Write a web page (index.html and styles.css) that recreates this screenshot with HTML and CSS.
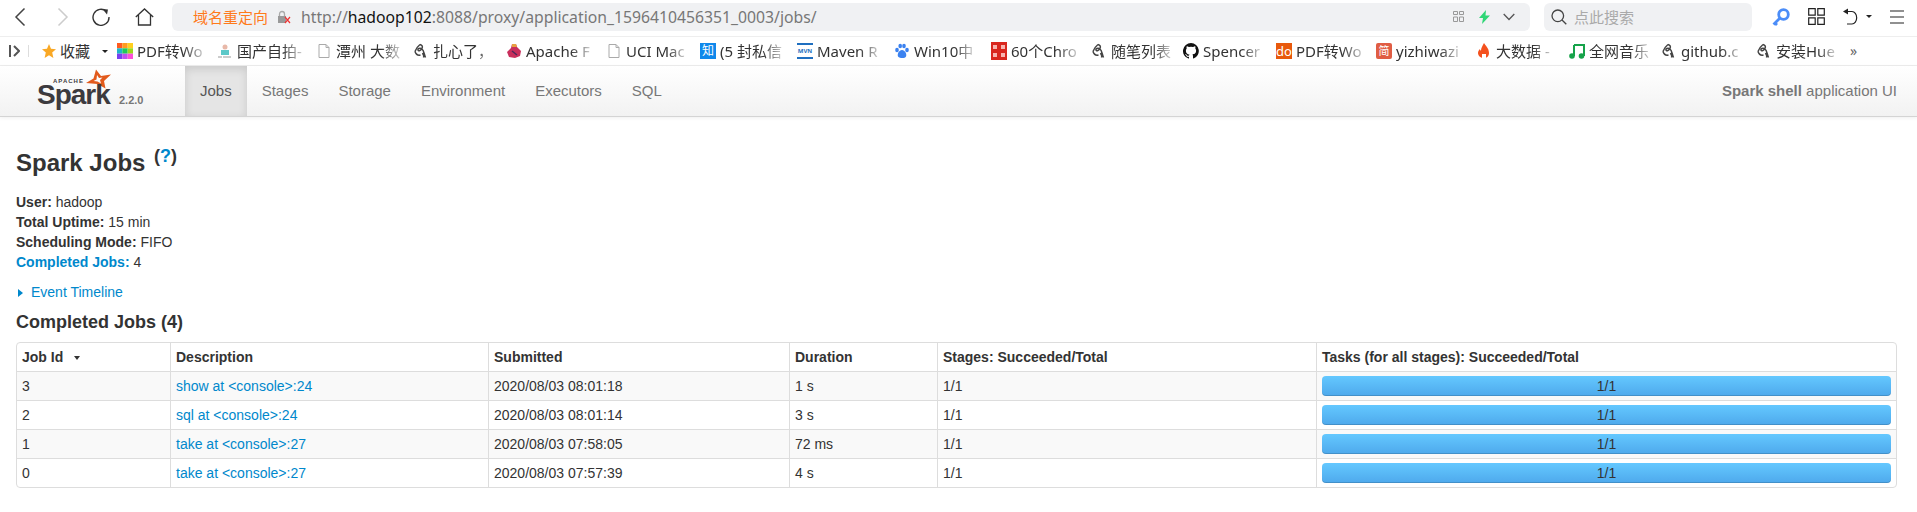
FILE: index.html
```html
<!DOCTYPE html>
<html lang="en">
<head>
  <meta charset="UTF-8">
  <title>Spark Jobs</title>
  <link rel="stylesheet" href="styles.css">
</head>
<body>
  <svg class="defs" width="0" height="0">
    <symbol id="quill" viewBox="0 0 16 16">
      <path d="M2 8.500c1 3 3.500 4 5.500 3.500M7 1.500C5 3 3 6 2 8.500M7 1.500c2 .5 3 2 2 4-1 2-3.500 3-4 1.500-.5-1.500 2-2.500 4-1 2 1.500 2 5 3.500 8.500M9.500 10c1 1.500 1.500 3 1 4.500" fill="none" stroke="#444" stroke-width="1.500"/>
    </symbol>
    <symbol id="doc" viewBox="0 0 16 16">
      <path d="M3 1.500h7l3 3v10H3zM10 1.500v3h3" fill="#fff" stroke="#aaa"/>
    </symbol>
  </svg>

  <div class="toolbar">
    <svg class="tool tool-back" width="12" height="20" viewBox="0 0 12 20"><path d="M10.500 1.500 2 10l8.500 8.500" fill="none" stroke="#444" stroke-width="1.500"/></svg>
    <svg class="tool tool-forward" width="12" height="20" viewBox="0 0 12 20"><path d="M1.500 1.500 10 10l-8.500 8.500" fill="none" stroke="#ccc" stroke-width="1.500"/></svg>
    <svg class="tool tool-reload" width="18" height="18" viewBox="0 0 18 18"><path d="M14.500 3.500A8 8 0 1 0 17 9" fill="none" stroke="#333" stroke-width="1.400"/><path d="M10.500 1 16 1.500 15 6.500z" fill="#333"/></svg>
    <svg class="tool tool-home" width="19" height="18" viewBox="0 0 19 18"><path d="M.8 9 9.500 1l8.700 8M3.500 7v10h12V7" fill="none" stroke="#333" stroke-width="1.300"/></svg>

    <div class="address">
      <span class="redirect">域名重定向</span>
      <svg class="lock" width="14" height="14" viewBox="0 0 14 14"><path d="M2.500 6V4a2.500 2.500 0 0 1 5 0v2" fill="none" stroke="#aaa" stroke-width="1.300"/><rect x="1" y="6" width="8" height="7" fill="#999"/><path d="m8 7 5 6m0-6-5 6" stroke="#e33" stroke-width="1.200"/></svg>
      <span class="url">http://<b>hadoop102</b>:8088/proxy/application_1596410456351_0003/jobs/</span>
      <svg class="qr" width="11" height="11" viewBox="0 0 11 11"><path d="M.5.5h4v3h-4zM6.500.5h4v3h-4zM.5 6h4v4.500h-4zM6.500 6h4v4.500h-4z" fill="none" stroke="#999"/></svg>
      <svg class="bolt" width="11" height="14" viewBox="0 0 11 14"><path d="M7 0 0 8h4l-1 6 8-8.500H6.500z" fill="#2fd675"/></svg>
      <svg class="chevron" width="12" height="8" viewBox="0 0 12 8"><path d="m.7 1 5.300 5.500L11.300 1" fill="none" stroke="#555" stroke-width="1.300"/></svg>
    </div>

    <div class="search">
      <svg width="16" height="16" viewBox="0 0 16 16"><circle cx="6.800" cy="6.800" r="5.800" fill="none" stroke="#444" stroke-width="1.300"/><path d="m11 11 4.300 4.300" stroke="#444" stroke-width="1.300"/></svg>
      <span>点此搜索</span>
    </div>

    <svg class="tool tool-key" width="18" height="18" viewBox="0 0 18 18"><circle cx="11.500" cy="6.500" r="4.800" fill="none" stroke="#4b8df8" stroke-width="2.800"/><path d="M8 10 1.500 16.500M3 15l2 2" stroke="#4b8df8" stroke-width="2.800"/></svg>
    <svg class="tool tool-grid" width="17" height="17" viewBox="0 0 17 17"><path d="M.7.7h6.500v6.500H.7zM9.800.7h6.500v6.500H9.800zM.7 9.800h6.500v6.500H.7zM9.800 9.800h6.500v6.500H9.800z" fill="none" stroke="#222" stroke-width="1.200"/></svg>
    <svg class="tool tool-undo" width="16" height="17" viewBox="0 0 16 17"><path d="M3 3.500h6a4.500 6 0 0 1 0 12.500H4" fill="none" stroke="#222" stroke-width="1.200"/><path d="M5 .5v6L0 3.500z" fill="#222"/></svg>
    <span class="tool-caret"></span>
    <svg class="tool tool-menu" width="14" height="14" viewBox="0 0 14 14"><path d="M0 1h14M0 7h14M0 13h14" stroke="#222" stroke-width="1.200"/></svg>
  </div>

  <div class="bookmarks">
    <svg class="bm-toggle" width="11" height="12" viewBox="0 0 11 12"><path d="M1 0v12" stroke="#555" stroke-width="2"/><path d="m5 1 5 5-5 5" fill="none" stroke="#555" stroke-width="2"/></svg>
    <span class="bm-divider"></span>
    <div class="bm bm-fav">
      <svg width="14" height="14" viewBox="0 0 14 14"><path d="m7 0 2 4.800 5 .4-3.800 3.300L11.400 14 7 11.200 2.600 14l1.200-5.500L0 5.200l5-.4z" fill="#f9a825"/></svg>
      <span class="bm-label">收藏</span>
      <span class="bm-caret"></span>
    </div>
    <div class="bm w100">
      <svg width="16" height="16" viewBox="0 0 15 15"><rect width="5" height="5" fill="#ff5a1f"/><rect x="5" width="5" height="5" fill="#ff9a1f"/><rect x="10" width="5" height="5" fill="#ffcf1f"/><rect y="5" width="5" height="5" fill="#1fb5c9"/><rect x="5" y="5" width="5" height="5" fill="#1fc95a"/><rect x="10" y="5" width="5" height="5" fill="#9ad81f"/><rect y="10" width="5" height="5" fill="#7a3ff0"/><rect x="5" y="10" width="5" height="5" fill="#c04ff0"/><rect x="10" y="10" width="5" height="5" fill="#ff4fd8"/></svg>
      <span class="bm-text">PDF转Wo</span>
    </div>
    <div class="bm w99">
      <svg width="16" height="16" viewBox="0 0 16 16"><circle cx="8" cy="4" r="2.500" fill="#e8b8a8"/><path d="M4 7h8v5H4z" fill="#5cc8c8"/><path d="M1 14h4M6 14h8" stroke="#999"/></svg>
      <span class="bm-text">国产自拍-</span>
    </div>
    <div class="bm w97">
      <svg width="16" height="16"><use href="#doc"/></svg>
      <span class="bm-text">潭州 大数</span>
    </div>
    <div class="bm w93">
      <svg width="16" height="16"><use href="#quill"/></svg>
      <span class="bm-text">扎心了，</span>
    </div>
    <div class="bm w100">
      <svg width="16" height="16" viewBox="0 0 16 16"><path d="M6 1h4l1 3 4 4-1 5-5 2-6-1-2-5 4-4z" fill="#c92f5c"/><path d="M6 1h4l1 3H6z" fill="#e8a040"/><path d="m6 8 5 4" stroke="#4a2a5a" stroke-width="1.500"/></svg>
      <span class="bm-text">Apache F</span>
    </div>
    <div class="bm w94">
      <svg width="16" height="16"><use href="#doc"/></svg>
      <span class="bm-text">UCI Mac</span>
    </div>
    <div class="bm w97">
      <span class="badge badge-zhi">知</span>
      <span class="bm-text">(5 封私信</span>
    </div>
    <div class="bm w97">
      <span class="badge badge-mvn">MVN</span>
      <span class="bm-text">Maven R</span>
    </div>
    <div class="bm w97">
      <svg width="16" height="16" viewBox="0 0 16 16" fill="#3b82f0"><ellipse cx="3" cy="7" rx="1.800" ry="2.300"/><ellipse cx="6.200" cy="3" rx="1.800" ry="2.300"/><ellipse cx="10" cy="3" rx="1.800" ry="2.300"/><ellipse cx="13" cy="7" rx="1.800" ry="2.300"/><path d="M8 7c3 0 5 4 4 6.500-1 2-6 2-8 0C3 11 5 7 8 7z"/></svg>
      <span class="bm-text">Win10中</span>
    </div>
    <div class="bm w100">
      <svg width="16" height="18" viewBox="0 0 16 18"><rect width="16" height="18" fill="#d9271e"/><path d="M2 3h4v4H2zM10 3h4v4h-4zM2 11h4v4H2zM10 11h4v4h-4z" fill="#f7b5b0"/></svg>
      <span class="bm-text">60个Chro</span>
    </div>
    <div class="bm w92">
      <svg width="16" height="16"><use href="#quill"/></svg>
      <span class="bm-text">随笔列表</span>
    </div>
    <div class="bm w93">
      <svg width="16" height="16" viewBox="0 0 16 16"><path fill="#111" d="M8 0a8 8 0 0 0-2.500 15.600c.4.100.5-.2.500-.4v-1.400c-2.200.5-2.700-1-2.700-1-.4-.9-.9-1.200-.9-1.200-.7-.5.100-.5.100-.5.800.1 1.200.8 1.200.8.700 1.200 1.900.9 2.300.7.100-.5.300-.9.500-1.100-1.800-.2-3.600-.9-3.600-4 0-.9.300-1.600.8-2.100-.1-.2-.4-1 .1-2.100 0 0 .7-.2 2.200.8a7.500 7.500 0 0 1 4 0c1.500-1 2.200-.8 2.200-.8.400 1.100.2 1.900.1 2.100.5.600.8 1.300.8 2.100 0 3.100-1.900 3.700-3.700 3.900.3.300.6.800.6 1.500v2.200c0 .2.100.5.600.4A8 8 0 0 0 8 0z"/></svg>
      <span class="bm-text">Spencer</span>
    </div>
    <div class="bm w100">
      <span class="badge badge-do">do</span>
      <span class="bm-text">PDF转Wo</span>
    </div>
    <div class="bm w100">
      <span class="badge badge-jian">简</span>
      <span class="bm-text">yizhiwazi</span>
    </div>
    <div class="bm w93">
      <svg width="16" height="16" viewBox="0 0 16 16"><path d="M8 0c1 2 5 5 5 10 0 3-2 5-5 5s-6-2-6-5c0-2 1-3 2-4 0 1 .5 1.500 1 1.500C5 5 6.500 3 8 0z" fill="#f4511e"/><path d="M6 15v-4h4v4z" fill="#fff"/></svg>
      <span class="bm-text">大数据 -</span>
    </div>
    <div class="bm w92">
      <svg width="16" height="16" viewBox="0 0 16 16"><path d="M5 2h10v11M5 2v11" fill="none" stroke="#16a34a" stroke-width="2"/><circle cx="3" cy="13" r="2.800" fill="#16a34a"/><circle cx="12.500" cy="13" r="2.800" fill="#16a34a"/></svg>
      <span class="bm-text">全网音乐</span>
    </div>
    <div class="bm w95">
      <svg width="16" height="16"><use href="#quill"/></svg>
      <span class="bm-text">github.c</span>
    </div>
    <div class="bm w94">
      <svg width="16" height="16"><use href="#quill"/></svg>
      <span class="bm-text">安装Hue</span>
    </div>
    <span class="bm-more">»</span>
  </div>

  <div class="navbar">
    <div class="brand">
      <div class="logo">
        <svg class="logo-star" width="30" height="22" viewBox="0 0 30 22"><path d="M12 1.500 17 8l10-1.500-7 6.500 1.500 7.500-8-4.500L2 15l7.500-4.500zM13 7l-.5 4.500-3 1.500 4 .5 3.500 2-1-3.500 2.500-2.500-3.500.5z" fill="#e25a1c" fill-rule="evenodd"/></svg>
        <span class="logo-apache">APACHE</span>
        <span class="logo-spark">Spark</span>
      </div>
      <span class="version">2.2.0</span>
    </div>
    <ul class="tabs">
      <li class="active">Jobs</li>
      <li>Stages</li>
      <li>Storage</li>
      <li>Environment</li>
      <li>Executors</li>
      <li>SQL</li>
    </ul>
    <p class="app-name"><strong>Spark shell</strong> application UI</p>
  </div>

  <div class="content">
    <h3>Spark Jobs <sup>(<a href="#">?</a>)</sup></h3>
    <ul class="summary">
      <li><strong>User:</strong> hadoop</li>
      <li><strong>Total Uptime:</strong> 15 min</li>
      <li><strong>Scheduling Mode:</strong> FIFO</li>
      <li><a href="#"><strong>Completed Jobs:</strong></a> 4</li>
    </ul>
    <a class="timeline" href="#"><span class="arrow-right"></span>Event Timeline</a>
    <h4>Completed Jobs (4)</h4>
    <table class="jobs">
      <thead>
        <tr>
          <th class="col-id">Job Id <span class="sort-arrow"></span></th>
          <th class="col-desc">Description</th>
          <th class="col-time">Submitted</th>
          <th class="col-dur">Duration</th>
          <th class="col-stages">Stages: Succeeded/Total</th>
          <th>Tasks (for all stages): Succeeded/Total</th>
        </tr>
      </thead>
      <tbody>
        <tr>
          <td>3</td>
          <td><a href="#">show at &lt;console&gt;:24</a></td>
          <td>2020/08/03 08:01:18</td>
          <td>1 s</td>
          <td>1/1</td>
          <td><div class="progress">1/1</div></td>
        </tr>
        <tr>
          <td>2</td>
          <td><a href="#">sql at &lt;console&gt;:24</a></td>
          <td>2020/08/03 08:01:14</td>
          <td>3 s</td>
          <td>1/1</td>
          <td><div class="progress">1/1</div></td>
        </tr>
        <tr>
          <td>1</td>
          <td><a href="#">take at &lt;console&gt;:27</a></td>
          <td>2020/08/03 07:58:05</td>
          <td>72 ms</td>
          <td>1/1</td>
          <td><div class="progress">1/1</div></td>
        </tr>
        <tr>
          <td>0</td>
          <td><a href="#">take at &lt;console&gt;:27</a></td>
          <td>2020/08/03 07:57:39</td>
          <td>4 s</td>
          <td>1/1</td>
          <td><div class="progress">1/1</div></td>
        </tr>
      </tbody>
    </table>
  </div>
</body>
</html>
```

FILE: styles.css
```css
* {
  box-sizing: border-box;
}

body {
  margin: 0;
  font-family: "Liberation Sans", Arial, sans-serif;
  font-size: 14px;
  line-height: 20px;
  color: #333;
  background: #fff;
}

a {
  color: #0088cc;
  text-decoration: none;
}

.defs {
  position: absolute;
}

/* browser toolbar */
.toolbar {
  display: flex;
  align-items: center;
  height: 37px;
  padding: 0 13px 3px 14px;
  border-bottom: 1px solid #eee;
  font-family: "Noto Sans CJK SC", "Noto Sans", sans-serif;
}

.tool {
  flex: none;
}

.tool-forward {
  margin-left: 31px;
}

.tool-reload {
  margin-left: 23px;
}

.tool-home {
  margin-left: 25px;
}

.address {
  display: flex;
  flex: none;
  align-items: center;
  width: 1358px;
  height: 28px;
  margin-left: 18px;
  padding: 0 15px 0 21px;
  background: #f0f1f3;
  border-radius: 6px;
}

.redirect {
  color: #ff7a1a;
  font-size: 15px;
}

.lock {
  margin-left: 9px;
}

.url {
  flex: 1;
  margin-left: 10px;
  font-family: "Noto Sans", sans-serif;
  font-size: 15.75px;
  color: #777;
}

.url b {
  font-weight: 400;
  color: #111;
}

.qr {
  margin-right: 15px;
}

.bolt {
  margin-right: 13px;
}

.search {
  display: flex;
  flex: none;
  align-items: center;
  gap: 7px;
  width: 208px;
  height: 28px;
  margin-left: 14px;
  padding-left: 7px;
  background: #f0f1f3;
  border-radius: 6px;
  color: #aaa;
  font-size: 15px;
}

.tool-key {
  margin-left: 20px;
}

.tool-grid {
  margin-left: 18px;
}

.tool-undo {
  margin-left: 18px;
}

.tool-caret {
  flex: none;
  width: 0;
  height: 0;
  margin-left: 7px;
  border: 3px solid transparent;
  border-top: 3px solid #222;
  border-bottom: 0;
}

.tool-menu {
  margin-left: 18px;
}

/* bookmarks bar */
.bookmarks {
  display: flex;
  align-items: center;
  height: 29px;
  padding-left: 9px;
  border-bottom: 1px solid #eee;
  font-family: "Noto Sans", "Noto Sans CJK SC", sans-serif;
  font-size: 15px;
  color: #333;
  white-space: nowrap;
}

.bm-divider {
  width: 1px;
  height: 12px;
  margin: 0 13px 0 8px;
  background: #ddd;
}

.bm {
  display: flex;
  flex: none;
  align-items: center;
  gap: 4px;
}

.bm svg {
  flex: none;
}

.bm-fav {
  width: 75px;
}

.bm-caret {
  width: 0;
  height: 0;
  margin-left: 8px;
  border: 3px solid transparent;
  border-top: 3px solid #222;
  border-bottom: 0;
}

.bm-text {
  -webkit-mask-image: linear-gradient(to right, #000 70%, rgba(0, 0, 0, 0.25));
  mask-image: linear-gradient(to right, #000 70%, rgba(0, 0, 0, 0.25));
}

.w92 { width: 92px; }
.w93 { width: 93px; }
.w94 { width: 94px; }
.w95 { width: 95px; }
.w97 { width: 97px; }
.w99 { width: 99px; }
.w100 { width: 100px; }

.badge {
  display: flex;
  flex: none;
  align-items: center;
  justify-content: center;
  width: 16px;
  height: 16px;
  color: #fff;
  font-size: 12px;
  line-height: 16px;
}

.badge-zhi {
  background: #0f88eb;
}

.badge-mvn {
  background: #fff;
  border-top: 2px solid #1f6fc0;
  border-bottom: 2px solid #1f6fc0;
  color: #1f6fc0;
  font-size: 6px;
  font-weight: 700;
}

.badge-do {
  background: #e8590c;
  font-size: 13px;
}

.badge-jian {
  background: #e05d44;
  border-radius: 2px;
  font-size: 11px;
}

.bm-more {
  color: #666;
  font-size: 14px;
}

/* spark navbar */
.navbar {
  display: flex;
  align-items: stretch;
  height: 51px;
  background: linear-gradient(to bottom, #fff, #f2f2f2);
  border-bottom: 1px solid #d4d4d4;
  box-shadow: 0 1px 4px rgba(0, 0, 0, 0.065);
  font-size: 15px;
}

.brand {
  display: flex;
  width: 185px;
  padding-left: 37px;
}

.logo {
  position: relative;
  width: 82px;
}

.logo-spark {
  position: absolute;
  left: 0;
  top: 18px;
  font-size: 28px;
  line-height: 22px;
  font-weight: 700;
  letter-spacing: -1px;
  color: #3c3a3e;
}

.logo-apache {
  position: absolute;
  left: 16px;
  top: 12px;
  font-size: 6px;
  line-height: 6px;
  font-weight: 700;
  letter-spacing: 1px;
  color: #3c3a3e;
}

.logo-star {
  position: absolute;
  left: 47px;
  top: 2px;
}

.version {
  align-self: flex-end;
  margin-bottom: 6px;
  color: #777;
  font-size: 11px;
  font-weight: 700;
}

.tabs {
  display: flex;
  flex: 1;
  margin: 0;
  padding: 0;
  list-style: none;
  color: #777;
}

.tabs li {
  padding: 15px;
}

.tabs .active {
  color: #555;
  background: #e5e5e5;
  box-shadow: inset 0 3px 8px rgba(0, 0, 0, 0.125);
}

.app-name {
  margin: 0;
  padding: 15px 20px 0 0;
  color: #777;
}

/* page content */
.content {
  padding: 26px 20px 0 16px;
}

h3 {
  margin: 0;
  font-size: 24px;
  line-height: 40px;
}

sup {
  margin-left: 2px;
  font-size: 18px;
  line-height: 0;
}

.summary {
  margin: 9px 0 0;
  padding: 0;
  list-style: none;
}

.timeline {
  display: block;
  margin-top: 10px;
}

.arrow-right {
  display: inline-block;
  width: 0;
  height: 0;
  margin: 0 8px 0 2px;
  border: 4px solid transparent;
  border-left: 5px solid #0088cc;
  border-right: 0;
}

h4 {
  margin: 10px 0;
  font-size: 18px;
  line-height: 20px;
}

.jobs {
  width: 100%;
  table-layout: fixed;
  border-collapse: separate;
  border-spacing: 0;
  border: 1px solid #ddd;
  border-radius: 4px;
}

.jobs th,
.jobs td {
  padding: 4px 5px;
  text-align: left;
  border-left: 1px solid #ddd;
  border-top: 1px solid #ddd;
}

.jobs th {
  border-top: 0;
}

.jobs th:first-child,
.jobs td:first-child {
  border-left: 0;
}

.jobs tbody tr:nth-child(odd) td {
  background: #f9f9f9;
}

.col-id { width: 153px; }
.col-desc { width: 318px; }
.col-time { width: 301px; }
.col-dur { width: 148px; }
.col-stages { width: 379px; }

.sort-arrow {
  display: inline-block;
  width: 0;
  height: 0;
  margin: 0 0 2px 7px;
  border: 3px solid transparent;
  border-top: 4px solid #333;
  border-bottom: 0;
}

.progress {
  height: 20px;
  text-align: center;
  background: linear-gradient(to bottom, #64c8ff, #4ea9ec);
  border-radius: 4px;
  box-shadow: inset 0 -1px 0 rgba(0, 0, 0, 0.15);
}
```
